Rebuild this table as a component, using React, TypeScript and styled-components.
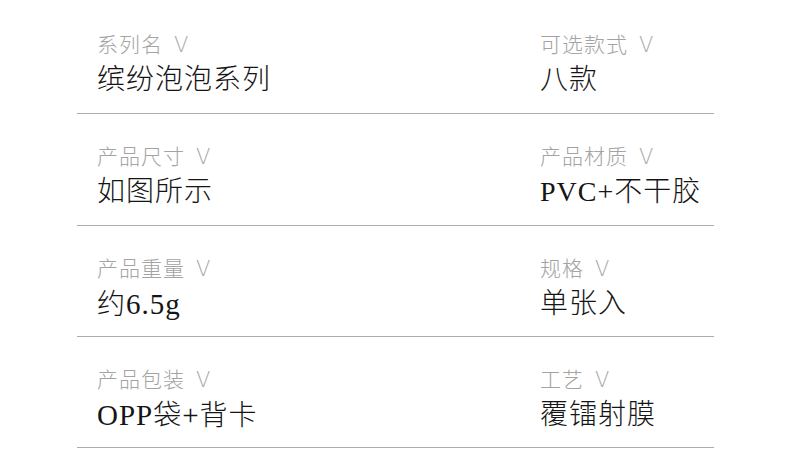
import React from "react";
import styled, { createGlobalStyle } from "styled-components";

const Global = createGlobalStyle`
  html, body { margin: 0; padding: 0; background: #ffffff; }
  body { width: 790px; height: 475px; overflow: hidden; }
`;

const Page = styled.div`
  width: 790px;
  height: 475px;
  padding: 2px 76px 0 77px;
  box-sizing: border-box;
  font-family: "Liberation Serif", "Noto Sans CJK SC", sans-serif;
`;

const Row = styled.div<{ $tall?: boolean }>`
  display: grid;
  grid-template-columns: 443px 1fr;
  height: ${(p) => (p.$tall ? 112 : 111)}px;
  box-sizing: border-box;
  border-bottom: 1px solid #acacac;
`;

const Cell = styled.div`
  display: flex;
  flex-direction: column;
  padding: 29px 0 0 20px;
`;

const Label = styled.div`
  display: flex;
  align-items: baseline;
  height: 25px;
  font-family: "Noto Sans CJK SC", sans-serif;
  font-weight: 300;
  font-size: 21px;
  line-height: 25px;
  color: #a3a3a3;
  letter-spacing: 1px;
`;

const Chevron = styled.span`
  margin-left: 11px;
  font-family: "DejaVu Sans", sans-serif;
  font-weight: 200;
  font-size: 21px;
  color: #a8a8a8;
  letter-spacing: 0;
`;

const Value = styled.div`
  margin-top: 6px;
  font-weight: 300;
  font-size: 28px;
  line-height: 36px;
  color: #151515;
  letter-spacing: 1px;
`;

const Latin = styled.span`
  font-size: 29px;
`;

const rows: [string, React.ReactNode, string, React.ReactNode][] = [
  ["系列名", "缤纷泡泡系列", "可选款式", "八款"],
  ["产品尺寸", "如图所示", "产品材质", "PVC+不干胶"],
  ["产品重量", <>约<Latin>6.5g</Latin></>, "规格", "单张入"],
  ["产品包装", <><Latin>OPP</Latin>袋<Latin>+</Latin>背卡</>, "工艺", "覆镭射膜"],
];

export default function App() {
  return (
    <>
      <Global />
      <Page>
        {rows.map(([l1, v1, l2, v2], i) => (
          <Row key={l1} $tall={i < 2}>
            <Cell>
              <Label>
                {l1}
                <Chevron>V</Chevron>
              </Label>
              <Value>{v1}</Value>
            </Cell>
            <Cell>
              <Label>
                {l2}
                <Chevron>V</Chevron>
              </Label>
              <Value>{v2}</Value>
            </Cell>
          </Row>
        ))}
      </Page>
    </>
  );
}
